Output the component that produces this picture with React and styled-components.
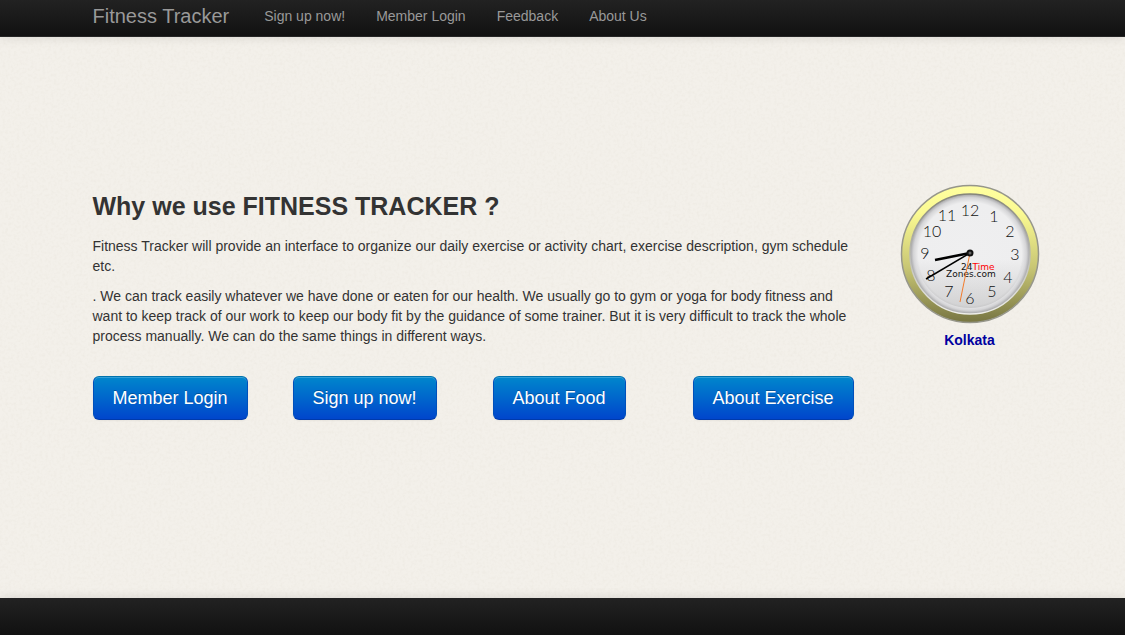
import React from "react";
import styled, { createGlobalStyle } from "styled-components";

const GlobalStyle = createGlobalStyle`
  body {
    margin: 0;
    background: #f3f0ea;
    color: #333;
    font: 14px/20px "Liberation Sans", Arial, sans-serif;
  }
`;

const Page = styled.div`
  position: relative;
  isolation: isolate;
  display: flex;
  flex-direction: column;
  min-height: 100vh;
`;

const Texture = styled.svg`
  position: absolute;
  inset: 0;
  width: 100%;
  height: 100%;
  z-index: -1;
`;

const Container = styled.div`
  width: 100%;
  max-width: 940px;
  margin: 0 auto;
`;

const Header = styled.header`
  background: linear-gradient(#222, #111);
  border-bottom: 1px solid #252525;
  box-shadow: 0 1px 10px rgba(0, 0, 0, 0.1);
`;

const Bar = styled(Container)`
  display: flex;
  align-items: center;
  gap: 35px;
  padding-bottom: 4px;
`;

const Brand = styled.a`
  color: #999;
  font-size: 20px;
  line-height: 32px;
  text-decoration: none;
`;

const Nav = styled.nav`
  display: flex;
  flex-wrap: wrap;
  gap: 31px;
`;

const NavLink = styled.a`
  color: #999;
  line-height: 32px;
  text-decoration: none;
`;

const Main = styled(Container)`
  flex: 1;
  display: flex;
  align-items: flex-start;
  gap: 28px;
  padding: 147px 0 40px;
  box-sizing: border-box;
`;

const Article = styled.section`
  flex: 1;
  min-width: 0;
`;

const Title = styled.h1`
  margin: 0 0 10px;
  padding-top: 2px;
  font-size: 25px;
  line-height: 40px;
`;

const Paragraph = styled.p`
  margin: 0 0 10px;
`;

const Actions = styled.div`
  display: grid;
  grid-template-columns: repeat(4, 200px);
  justify-items: start;
  margin-top: 30px;
`;

const Button = styled.button`
  height: 44px;
  padding: 0 19px;
  border: 1px solid;
  border-color: #0073ad #0050bb #003aab;
  border-radius: 6px;
  background: linear-gradient(#0088cc, #0044cc) border-box;
  box-shadow: inset 0 1px 0 rgba(255, 255, 255, 0.2), 0 1px 2px rgba(0, 0, 0, 0.05);
  color: #fff;
  font: 18px/20px "Liberation Sans", Arial, sans-serif;
  text-shadow: 0 -1px 0 rgba(0, 0, 0, 0.25);
  white-space: nowrap;
  cursor: pointer;
`;

const Aside = styled.aside`
  flex: none;
  display: flex;
  flex-direction: column;
  align-items: center;
  gap: 6px;
  width: 154px;
  margin-right: -14px;
`;

const City = styled.a`
  color: #0000a0;
  font-weight: bold;
  text-decoration: none;
`;

const Footer = styled.footer`
  min-height: 37px;
  background: linear-gradient(#222, #111);
  box-shadow: 0 -1px 10px rgba(0, 0, 0, 0.1);
`;

const links = ["Sign up now!", "Member Login", "Feedback", "About Us"];
const actions = ["Member Login", "Sign up now!", "About Food", "About Exercise"];
const hours = [
  ["12", 70, 32], ["1", 94, 38], ["2", 110, 53], ["3", 115, 76],
  ["4", 108, 99], ["5", 92, 113], ["6", 70, 120], ["7", 49, 113],
  ["8", 31, 97], ["9", 25, 75], ["10", 32, 53], ["11", 47, 37],
];

function Clock() {
  return (
    <svg width="140" height="140" viewBox="0 0 140 140" role="img" aria-label="Clock">
      <defs>
        <linearGradient id="ring" x1="0" y1="0" x2="0" y2="1">
          <stop offset="0" stopColor="#ffffa0" />
          <stop offset="0.2" stopColor="#fbfa92" />
          <stop offset="0.6" stopColor="#c8c674" />
          <stop offset="1" stopColor="#777542" />
        </linearGradient>
        <linearGradient id="rim" x1="0" y1="0" x2="0" y2="1">
          <stop offset="0" stopColor="#85857a" />
          <stop offset="1" stopColor="#eeeeea" />
        </linearGradient>
        <radialGradient id="face">
          <stop offset="0" stopColor="#efeff0" />
          <stop offset="0.86" stopColor="#eeeeef" />
          <stop offset="0.94" stopColor="#d5d5d7" />
          <stop offset="1" stopColor="#a2a2a4" />
        </radialGradient>
        <linearGradient id="shade" x1="0" y1="0" x2="0" y2="1">
          <stop offset="0.55" stopColor="#888" stopOpacity="0" />
          <stop offset="1" stopColor="#888" stopOpacity="0.28" />
        </linearGradient>
      </defs>
      <circle cx="70" cy="70" r="68.500" fill="url(#ring)" stroke="#96968a" strokeWidth="1.500" />
      <circle cx="70" cy="70" r="60" fill="url(#face)" stroke="url(#rim)" strokeWidth="1.500" />
      <circle cx="70" cy="70" r="54" fill="url(#shade)" />
      <g fill="#111" fontFamily="Lato, sans-serif" fontWeight="300" fontSize="16" textAnchor="middle">
        {hours.map(([n, x, y]) => <text key={n} x={x} y={y}>{n}</text>)}
      </g>
      <g fontFamily="'DejaVu Sans', sans-serif" fontSize="9" fill="#111">
        <text x="61" y="86">24<tspan fill="#f00">Time</tspan></text>
        <text x="46" y="93">Zones.com</text>
      </g>
      <path d="M70 69 L35 76" stroke="#000" strokeWidth="2.600" />
      <path d="M70 69 L26 95" stroke="#000" strokeWidth="1.500" />
      <path d="M70 69 L60 118" stroke="#f37b2b" strokeWidth="1" />
      <circle cx="70" cy="69" r="3.500" fill="#111" />
      <circle cx="70" cy="69" r="1.500" fill="#666" />
    </svg>
  );
}

export default function App() {
  return (
    <Page>
      <GlobalStyle />
      <Texture aria-hidden="true">
        <filter id="grain" x="0" y="0" width="100%" height="100%">
          <feTurbulence type="fractalNoise" baseFrequency="0.35" numOctaves="3" seed="4" />
          <feColorMatrix values="0 0 0 0 0.6  0 0 0 0 0.55  0 0 0 0 0.45  0.22 0 0 0 -0.09" />
        </filter>
        <rect width="100%" height="100%" filter="url(#grain)" />
      </Texture>
      <Header>
        <Bar>
          <Brand href="#">Fitness Tracker</Brand>
          <Nav>
            {links.map((l) => <NavLink key={l} href="#">{l}</NavLink>)}
          </Nav>
        </Bar>
      </Header>
      <Main as="main">
        <Article>
          <Title>Why we use FITNESS TRACKER ?</Title>
          <Paragraph>
            Fitness Tracker will provide an interface to organize our daily exercise or activity
            chart, exercise description, gym schedule etc.
          </Paragraph>
          <Paragraph>
            . We can track easily whatever we have done or eaten for our health. We usually go to
            gym or yoga for body fitness and want to keep track of our work to keep our body fit by
            the guidance of some trainer. But it is very difficult to track the whole process
            manually. We can do the same things in different ways.
          </Paragraph>
          <Actions>
            {actions.map((a) => <Button key={a} type="button">{a}</Button>)}
          </Actions>
        </Article>
        <Aside>
          <Clock />
          <City href="#">Kolkata</City>
        </Aside>
      </Main>
      <Footer />
    </Page>
  );
}
